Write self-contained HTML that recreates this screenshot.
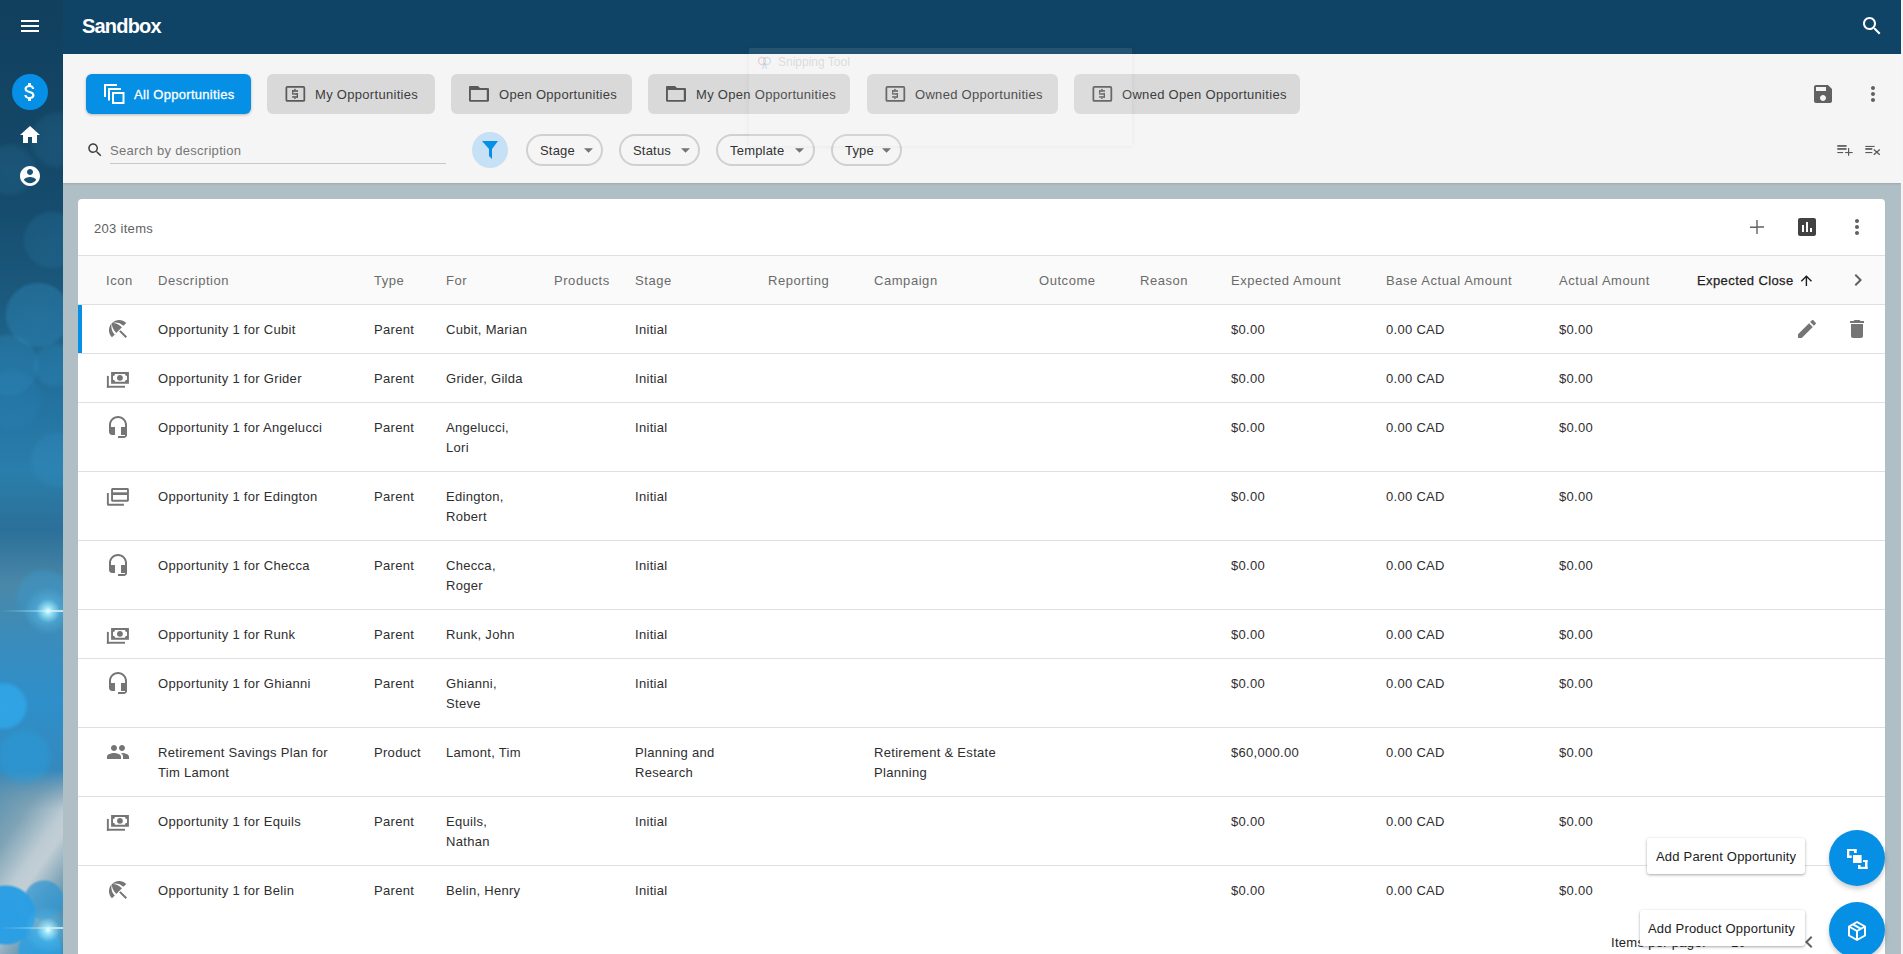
<!DOCTYPE html>
<html><head><meta charset="utf-8">
<style>
*{box-sizing:border-box;margin:0;padding:0}
html,body{width:1903px;height:954px;overflow:hidden}
body{position:relative;background:#b0bec5;font-family:"Liberation Sans",sans-serif;font-size:13px;color:#212121}
.a{position:absolute}
svg{display:block}
#side{left:0;top:0;width:63px;height:954px;overflow:hidden;
background:
radial-gradient(circle at 48px 611px,rgba(240,255,255,1) 0,rgba(170,240,255,.85) 4px,rgba(100,200,240,.35) 12px,rgba(80,180,230,0) 24px),
radial-gradient(circle at 4px 706px,rgba(48,165,230,.95) 0,rgba(48,165,230,.9) 20px,rgba(48,165,230,0) 25px),
radial-gradient(circle at 24px 757px,rgba(44,150,210,.85) 0,rgba(44,150,210,.75) 22px,rgba(44,150,210,0) 30px),
radial-gradient(circle at 44px 597px,rgba(60,150,200,.6) 0,rgba(60,150,200,.5) 24px,rgba(60,150,200,0) 30px),
radial-gradient(circle at 38px 315px,rgba(45,135,185,.45) 0,rgba(45,135,185,.4) 30px,rgba(45,135,185,0) 34px),radial-gradient(circle at 8px 365px,rgba(45,135,185,.4) 0,rgba(45,135,185,.35) 28px,rgba(45,135,185,0) 32px),radial-gradient(circle at 52px 240px,rgba(40,120,165,.3) 0,rgba(40,120,165,.25) 26px,rgba(40,120,165,0) 30px),radial-gradient(circle at 10px 170px,rgba(40,110,150,.3) 0,rgba(40,110,150,.25) 22px,rgba(40,110,150,0) 28px),radial-gradient(circle at 58px 140px,rgba(40,110,150,.3) 0,rgba(40,110,150,.25) 24px,rgba(40,110,150,0) 30px),radial-gradient(circle at 55px 365px,rgba(45,140,190,.35) 0,rgba(45,140,190,.3) 18px,rgba(45,140,190,0) 24px),
radial-gradient(circle at 12px 400px,rgba(40,130,180,.3) 0,rgba(40,130,180,.25) 26px,rgba(40,130,180,0) 32px),
radial-gradient(circle at 58px 460px,rgba(50,140,190,.35) 0,rgba(50,140,190,.3) 24px,rgba(50,140,190,0) 30px),
linear-gradient(180deg,#113f5e 0px,#134564 100px,#154b6c 200px,#1b5a7e 300px,#2372a0 400px,#2a7eab 470px,#2b7099 530px,#4a88a8 585px,#3a8cbc 640px,#2e8fca 700px,#3489bd 770px,#7097ab 805px,#b4c3cb 840px,#c5d0d6 868px,#5aa0c8 888px,#2b96d8 920px,#2a92d6 954px)}

#top{left:63px;top:0;width:1838px;height:54px;background:#104466}
#tb{left:63px;top:54px;width:1838px;height:129px;background:#f5f5f5;box-shadow:0 1px 2px rgba(0,0,0,.12)}
#card{left:78px;top:199px;width:1807px;height:760px;background:#fff;border-radius:4px 4px 0 0}
.t{position:absolute;white-space:nowrap;line-height:20px;letter-spacing:.3px;color:#2e2e2e}
.btn{position:absolute;top:74px;height:40px;border-radius:6px;background:#d9d9d9;color:#3d3d3d}
.btn .lbl{position:absolute;top:11px;line-height:20px;white-space:nowrap;letter-spacing:.3px}
.chip{position:absolute;top:134px;height:32px;border:2px solid #d0d0d0;border-radius:16px}
.chip .lbl{position:absolute;left:12px;top:5px;line-height:20px;letter-spacing:.2px;color:#333}
.hdr{position:absolute;top:271px;line-height:20px;white-space:nowrap;color:#6a6a6a;letter-spacing:.55px}
.line{position:absolute;left:78px;width:1807px;height:1px;background:#e0e0e0}
.ic{position:absolute;width:24px;height:24px}
</style></head><body>
<div id="side" class="a"></div>
<div id="top" class="a"></div>
<div class="a" style="left:0;top:610px;width:63px;height:2px;background:linear-gradient(90deg,rgba(200,245,255,0),rgba(200,245,255,.45) 70%,rgba(255,255,255,.7))"></div>
<div class="a" style="left:0;top:770px;width:63px;height:184px;-webkit-mask-image:linear-gradient(to bottom,transparent 0,#000 40px);background:
radial-gradient(circle at 48px 930px,rgba(240,255,255,1) 0,rgba(170,240,255,.85) 4px,rgba(100,200,240,.35) 12px,rgba(80,180,230,0) 24px),
radial-gradient(circle at 6px 915px,rgba(42,158,228,1) 0,rgba(42,158,228,.97) 28px,rgba(42,158,228,0) 31px),
radial-gradient(circle at 44px 900px,rgba(45,150,210,.75) 0,rgba(45,150,210,.7) 18px,rgba(45,150,210,0) 21px),
radial-gradient(circle at 40px 950px,rgba(45,160,225,.9) 0,rgba(45,160,225,.85) 20px,rgba(45,160,225,0) 23px),
linear-gradient(125deg,#4f8db0 0%,#7ea3b6 28%,#bccbd3 48%,#c2ced5 56%,#86a9bc 70%,#4a8db3 85%,#3d8ab8 100%);background-position:0 -770px,0 -770px,0 -770px,0 -770px,0 0;background-size:63px 954px,63px 954px,63px 954px,63px 954px,63px 184px;background-repeat:no-repeat"></div>
<div class="a" style="left:0;top:927px;width:63px;height:2px;background:linear-gradient(90deg,rgba(200,245,255,0),rgba(200,245,255,.45) 70%,rgba(255,255,255,.7))"></div>
<div id="tb" class="a"></div>
<div class="a" style="left:1901px;top:0;width:2px;height:954px;background:#f4f4f4"></div>

<!-- top bar -->
<svg class="a" style="left:18px;top:14px" width="24" height="24" viewBox="0 0 24 24"><path fill="#fff" d="M3 18h18v-2H3v2zm0-5h18v-2H3v2zm0-7v2h18V6H3z"/></svg>
<div class="a" style="left:82px;top:14px;line-height:24px;font-size:20px;font-weight:bold;color:#fff;letter-spacing:-0.8px">Sandbox</div>
<svg class="a" style="left:1860px;top:14px" width="24" height="24" viewBox="0 0 24 24"><path fill="#fff" d="M15.5 14h-.79l-.28-.27C15.41 12.59 16 11.11 16 9.5 16 5.91 13.09 3 9.5 3S3 5.91 3 9.5 5.91 16 9.5 16c1.61 0 3.09-.59 4.23-1.57l.27.28v.79l5 4.99L20.49 19l-4.99-5zm-6 0C7.01 14 5 11.99 5 9.5S7.01 5 9.5 5 14 7.01 14 9.5 11.99 14 9.5 14z"/></svg>
<!-- sidebar icons -->
<div class="a" style="left:12px;top:74px;width:36px;height:36px;border-radius:50%;background:#0590e6"></div>
<svg class="a" style="left:18px;top:80px" width="24" height="24" viewBox="0 0 24 24"><path fill="#fff" d="M11.8 10.9c-2.27-.59-3-1.2-3-2.15 0-1.09 1.01-1.85 2.7-1.85 1.78 0 2.440.85 2.5 2.1h2.21c-.07-1.72-1.12-3.3-3.21-3.81V3h-3v2.16c-1.94.42-3.5 1.68-3.5 3.610 0 2.31 1.91 3.46 4.7 4.13 2.5.6 3 1.48 3 2.41 0 .69-.49 1.79-2.7 1.79-2.06 0-2.87-.92-2.98-2.1h-2.2c.12 2.19 1.76 3.42 3.68 3.83V21h3v-2.15c1.95-.37 3.5-1.5 3.5-3.55 0-2.84-2.43-3.81-4.7-4.4z"/></svg>
<svg class="a" style="left:18px;top:123px" width="24" height="24" viewBox="0 0 24 24"><path fill="#fff" d="M10 20v-6h4v6h5v-8h3L12 3 2 12h3v8z"/></svg>
<svg class="a" style="left:18px;top:164px" width="24" height="24" viewBox="0 0 24 24"><path fill="#fff" d="M12 2C6.480 2 2 6.48 2 12s4.48 10 10 10 10-4.48 10-10S17.52 2 12 2zm0 3c1.66 0 3 1.34 3 3s-1.34 3-3 3-3-1.34-3-3 1.34-3 3-3zm0 14.2c-2.5 0-4.71-1.28-6-3.220.03-1.990 4-3.08 6-3.08 1.99 0 5.97 1.09 6 3.08-1.29 1.94-3.5 3.22-6 3.22z"/></svg>
<!-- toolbar buttons -->
<div class="a" style="left:86px;top:74px;width:165px;height:40px;border-radius:6px;background:#0590e6;box-shadow:0 1px 3px rgba(0,0,0,.25)"></div>
<svg class="a" style="left:102px;top:82px" width="24" height="24" viewBox="0 0 24 24"><g fill="none" stroke="#fff" stroke-width="2"><path d="M3 15V3h12"/><path d="M7 18.5V7h12"/><rect x="11" y="11" width="10.5" height="10"/></g></svg>
<div class="a" style="left:134px;top:85px;line-height:20px;color:#fff;letter-spacing:.3px;-webkit-text-stroke:.3px #fff;white-space:nowrap">All Opportunities</div>

<div class="btn" style="left:267px;width:168px"><svg class="a" style="left:16px;top:10px" width="24" height="22" viewBox="0 0 24 22"><rect x="3.375" y="2.875" width="17.95" height="14.05" rx="1" fill="none" stroke="#5a5a5a" stroke-width="1.75"/><g fill="#5a5a5a"><rect x="11.1" y="4.9" width="1.6" height="1.3"/><rect x="9.1" y="6.2" width="5.9" height="1.6"/><rect x="9.1" y="6.2" width="1.2" height="4.5"/><rect x="10.3" y="9.2" width="4.7" height="1.5"/><rect x="13.7" y="9.2" width="1.3" height="4.5"/><rect x="9.1" y="12.2" width="5.9" height="1.5"/><rect x="11.1" y="13.7" width="1.6" height="1.2"/></g></svg><div class="lbl" style="left:48px">My Opportunities</div></div>
<div class="btn" style="left:451px;width:181px"><svg class="a" style="left:16px;top:10px" width="24" height="22" viewBox="0 0 24 22"><path fill="#5a5a5a" fill-rule="evenodd" d="M2 3.2C2 2.5 2.5 2 3.2 2H11l2 2h7.8c.7 0 1.2.5 1.2 1.2v11.4c0 .7-.5 1.2-1.2 1.2H3.2c-.7 0-1.2-.5-1.2-1.2zM3.9 5.9v10h15.9v-10z"/></svg><div class="lbl" style="left:48px">Open Opportunities</div></div>
<div class="btn" style="left:648px;width:202px"><svg class="a" style="left:16px;top:10px" width="24" height="22" viewBox="0 0 24 22"><path fill="#5a5a5a" fill-rule="evenodd" d="M2 3.2C2 2.5 2.5 2 3.2 2H11l2 2h7.8c.7 0 1.2.5 1.2 1.2v11.4c0 .7-.5 1.2-1.2 1.2H3.2c-.7 0-1.2-.5-1.2-1.2zM3.9 5.9v10h15.9v-10z"/></svg><div class="lbl" style="left:48px">My Open Opportunities</div></div>
<div class="btn" style="left:867px;width:191px"><svg class="a" style="left:16px;top:10px" width="24" height="22" viewBox="0 0 24 22"><rect x="3.375" y="2.875" width="17.95" height="14.05" rx="1" fill="none" stroke="#5a5a5a" stroke-width="1.75"/><g fill="#5a5a5a"><rect x="11.1" y="4.9" width="1.6" height="1.3"/><rect x="9.1" y="6.2" width="5.9" height="1.6"/><rect x="9.1" y="6.2" width="1.2" height="4.5"/><rect x="10.3" y="9.2" width="4.7" height="1.5"/><rect x="13.7" y="9.2" width="1.3" height="4.5"/><rect x="9.1" y="12.2" width="5.9" height="1.5"/><rect x="11.1" y="13.7" width="1.6" height="1.2"/></g></svg><div class="lbl" style="left:48px">Owned Opportunities</div></div>
<div class="btn" style="left:1074px;width:226px"><svg class="a" style="left:16px;top:10px" width="24" height="22" viewBox="0 0 24 22"><rect x="3.375" y="2.875" width="17.95" height="14.05" rx="1" fill="none" stroke="#5a5a5a" stroke-width="1.75"/><g fill="#5a5a5a"><rect x="11.1" y="4.9" width="1.6" height="1.3"/><rect x="9.1" y="6.2" width="5.9" height="1.6"/><rect x="9.1" y="6.2" width="1.2" height="4.5"/><rect x="10.3" y="9.2" width="4.7" height="1.5"/><rect x="13.7" y="9.2" width="1.3" height="4.5"/><rect x="9.1" y="12.2" width="5.9" height="1.5"/><rect x="11.1" y="13.7" width="1.6" height="1.2"/></g></svg><div class="lbl" style="left:48px">Owned Open Opportunities</div></div>

<svg class="a" style="left:1811px;top:82px" width="24" height="24" viewBox="0 0 24 24"><path fill="#616161" d="M17 3H5c-1.11 0-2 .9-2 2v14c0 1.1.89 2 2 2h14c1.1 0 2-.9 2-2V7l-4-4zm-5 16c-1.66 0-3-1.34-3-3s1.34-3 3-3 3 1.34 3 3-1.34 3-3 3zm3-10H5V5h10v4z"/></svg>
<svg class="a" style="left:1861px;top:82px" width="24" height="24" viewBox="0 0 24 24"><path fill="#616161" d="M12 8c1.1 0 2-.9 2-2s-.9-2-2-2-2 .9-2 2 .9 2 2 2zm0 2c-1.1 0-2 .9-2 2s.9 2 2 2 2-.9 2-2-.9-2-2-2zm0 6c-1.1 0-2 .9-2 2s.9 2 2 2 2-.9 2-2-.9-2-2-2z"/></svg>

<!-- search row -->
<svg class="a" style="left:86px;top:141px" width="18" height="18" viewBox="0 0 24 24"><path fill="#424242" d="M15.5 14h-.79l-.28-.27C15.41 12.59 16 11.11 16 9.5 16 5.91 13.09 3 9.5 3S3 5.91 3 9.5 5.91 16 9.5 16c1.61 0 3.09-.59 4.23-1.57l.27.28v.79l5 4.99L20.49 19l-4.99-5zm-6 0C7.01 14 5 11.99 5 9.5S7.01 5 9.5 5 14 7.01 14 9.5 11.99 14 9.5 14z"/></svg>
<div class="t" style="left:110px;top:141px;color:#757575">Search by description</div>
<div class="a" style="left:110px;top:163px;width:336px;height:1px;background:#c8c8c8"></div>
<div class="a" style="left:472px;top:132px;width:36px;height:36px;border-radius:50%;background:#c6e1f5"></div>
<svg class="a" style="left:481px;top:140px" width="18" height="20" viewBox="0 0 18 20"><path fill="#0590e6" d="M1 1h16l-6 8v10l-3-3V9z"/></svg>
<div class="chip" style="left:526px;width:77px"><div class="lbl">Stage</div></div>
<div class="chip" style="left:619px;width:81px"><div class="lbl">Status</div></div>
<div class="chip" style="left:716px;width:99px"><div class="lbl">Template</div></div>
<div class="chip" style="left:831px;width:71px"><div class="lbl">Type</div></div>
<svg class="a" style="left:584px;top:148px" width="9" height="5" viewBox="0 0 10 5"><path fill="#757575" d="M0 0h10L5 5z"/></svg>
<svg class="a" style="left:681px;top:148px" width="9" height="5" viewBox="0 0 10 5"><path fill="#757575" d="M0 0h10L5 5z"/></svg>
<svg class="a" style="left:795px;top:148px" width="9" height="5" viewBox="0 0 10 5"><path fill="#757575" d="M0 0h10L5 5z"/></svg>
<svg class="a" style="left:882px;top:148px" width="9" height="5" viewBox="0 0 10 5"><path fill="#757575" d="M0 0h10L5 5z"/></svg>
<svg class="a" style="left:1836px;top:142px" width="18" height="16" viewBox="0 0 18 16"><g fill="#5a5a5a"><rect x="1.3" y="3.1" width="9.3" height="1.7"/><rect x="1.3" y="6.1" width="9.3" height="1.7"/><rect x="1.3" y="10" width="5.9" height="1.1"/><rect x="12" y="6.1" width="1.2" height="7.7"/><rect x="9.1" y="10" width="7.6" height="1.1"/></g></svg>
<svg class="a" style="left:1864px;top:142px" width="18" height="16" viewBox="0 0 18 16"><g fill="#5a5a5a"><rect x="1.3" y="3.9" width="9.3" height="1.1"/><rect x="1.3" y="6.1" width="7" height="1.7"/><rect x="1.3" y="10" width="7" height="1.1"/></g><path d="M9.8 7.5l6 5.2M15.8 7.5l-6 5.2" stroke="#5a5a5a" stroke-width="1.3"/></svg>

<div id="card" class="a"></div>
<div class="t" style="left:94px;top:219px;color:#616161">203 items</div>
<svg class="a" style="left:1745px;top:215px" width="24" height="24" viewBox="0 0 24 24"><path fill="#616161" d="M19 12.7h-6.3V19h-1.4v-6H5v-1.4h6.3V5h1.4v6.3H19z"/></svg>
<svg class="a" style="left:1795px;top:215px" width="24" height="24" viewBox="0 0 24 24"><path fill="#424242" d="M19 3H5c-1.1 0-2 .9-2 2v14c0 1.1.9 2 2 2h14c1.1 0 2-.9 2-2V5c0-1.1-.9-2-2-2zM9 17H7v-7h2v7zm4 0h-2V7h2v10zm4 0h-2v-4h2v4z"/></svg>
<svg class="a" style="left:1845px;top:215px" width="24" height="24" viewBox="0 0 24 24"><path fill="#616161" d="M12 8c1.1 0 2-.9 2-2s-.9-2-2-2-2 .9-2 2 .9 2 2 2zm0 2c-1.1 0-2 .9-2 2s.9 2 2 2 2-.9 2-2-.9-2-2-2zm0 6c-1.1 0-2 .9-2 2s.9 2 2 2 2-.9 2-2-.9-2-2-2z"/></svg>
<div class="line" style="top:255px"></div>
<div class="a" style="left:78px;top:256px;width:1807px;height:48px;background:#fafafa"></div>
<div class="hdr" style="left:106px">Icon</div>
<div class="hdr" style="left:158px">Description</div>
<div class="hdr" style="left:374px">Type</div>
<div class="hdr" style="left:446px">For</div>
<div class="hdr" style="left:554px">Products</div>
<div class="hdr" style="left:635px">Stage</div>
<div class="hdr" style="left:768px">Reporting</div>
<div class="hdr" style="left:874px">Campaign</div>
<div class="hdr" style="left:1039px">Outcome</div>
<div class="hdr" style="left:1140px">Reason</div>
<div class="hdr" style="left:1231px">Expected Amount</div>
<div class="hdr" style="left:1386px">Base Actual Amount</div>
<div class="hdr" style="left:1559px">Actual Amount</div>
<div class="hdr" style="left:1697px;color:#1e1e1e;letter-spacing:.4px;-webkit-text-stroke:.25px #1e1e1e">Expected Close</div>
<svg class="a" style="left:1798px;top:273px" width="16" height="16" viewBox="0 0 16 16"><g fill="none" stroke="#1e1e1e" stroke-width="1.4"><path d="M8.4 3.2V13"/><path d="M3.3 8.2L8.4 3.2l5.1 5"/></g></svg>
<svg class="a" style="left:1846px;top:268px" width="24" height="24" viewBox="0 0 24 24"><path fill="#616161" d="M10 6L8.59 7.41 13.17 12l-4.58 4.59L10 18l6-6z"/></svg>
<div class="line" style="top:304px"></div>
<svg class="a" style="left:106px;top:317px" width="24" height="24" viewBox="0 0 24 24"><path fill="#757575" d="M13.127 14.56l1.43-1.43 6.44 6.443L19.57 21zm4.293-5.73l2.86-2.86c-3.95-3.95-10.35-3.96-14.3-.02 3.930-1.3 8.310-.25 11.44 2.88zM5.95 5.98c-3.94 3.95-3.93 10.35.02 14.3l2.86-2.86C5.7 14.29 4.65 9.91 5.95 5.98zm.02-.02l-.01.01c-.38 3.01 1.17 6.88 4.3 10.02l5.73-5.73c-3.13-3.13-7.01-4.68-10.02-4.3z"/></svg>
<div class="t" style="left:158px;top:320px">Opportunity 1 for Cubit</div>
<div class="t" style="left:374px;top:320px">Parent</div>
<div class="t" style="left:446px;top:320px">Cubit, Marian</div>
<div class="t" style="left:635px;top:320px">Initial</div>
<div class="t" style="left:1231px;top:320px">$0.00</div>
<div class="t" style="left:1386px;top:320px">0.00 CAD</div>
<div class="t" style="left:1559px;top:320px">$0.00</div>
<div class="line" style="top:353px"></div>
<svg class="a" style="left:106px;top:366px" width="24" height="24" viewBox="0 0 24 24"><g fill="#757575"><path fill-rule="evenodd" d="M5.1 6h17.8v11.7H5.1zM9 7.9h10a2 2 0 0 0 2 2v3.9a2 2 0 0 0-2 2H9a2 2 0 0 0-2-2V9.9a2 2 0 0 0 2-2z"/><circle cx="13.95" cy="11.85" r="2.9"/><rect x=".9" y="9.9" width="1.9" height="11.8"/><rect x=".9" y="19.8" width="18.1" height="1.9"/></g></svg>
<div class="t" style="left:158px;top:369px">Opportunity 1 for Grider</div>
<div class="t" style="left:374px;top:369px">Parent</div>
<div class="t" style="left:446px;top:369px">Grider, Gilda</div>
<div class="t" style="left:635px;top:369px">Initial</div>
<div class="t" style="left:1231px;top:369px">$0.00</div>
<div class="t" style="left:1386px;top:369px">0.00 CAD</div>
<div class="t" style="left:1559px;top:369px">$0.00</div>
<div class="line" style="top:402px"></div>
<svg class="a" style="left:106px;top:415px" width="24" height="24" viewBox="0 0 24 24"><path fill="#757575" d="M12 1c-4.97 0-9 4.03-9 9v7c0 1.66 1.34 3 3 3h3v-8H5v-2c0-3.87 3.13-7 7-7s7 3.13 7 7v2h-4v8h4v1h-7v2h6c1.66 0 3-1.34 3-3V10c0-4.97-4.03-9-9-9z"/></svg>
<div class="t" style="left:158px;top:418px">Opportunity 1 for Angelucci</div>
<div class="t" style="left:374px;top:418px">Parent</div>
<div class="t" style="left:446px;top:418px">Angelucci,<br>Lori</div>
<div class="t" style="left:635px;top:418px">Initial</div>
<div class="t" style="left:1231px;top:418px">$0.00</div>
<div class="t" style="left:1386px;top:418px">0.00 CAD</div>
<div class="t" style="left:1559px;top:418px">$0.00</div>
<div class="line" style="top:471px"></div>
<svg class="a" style="left:106px;top:484px" width="24" height="24" viewBox="0 0 24 24"><g fill="#757575"><path fill-rule="evenodd" d="M6.6 4.1h14.8c.8 0 1.5.7 1.5 1.5v10.6c0 .8-.7 1.5-1.5 1.5H6.6c-.8 0-1.5-.7-1.5-1.5V5.6c0-.8.7-1.5 1.5-1.5zM7 6v9.8h14V6z"/><rect x="7" y="8.3" width="14" height="2.7"/><path d="M.9 8.9h1.9v10.9h15.1v1.9H2.4c-.8 0-1.5-.7-1.5-1.5z"/></g></svg>
<div class="t" style="left:158px;top:487px">Opportunity 1 for Edington</div>
<div class="t" style="left:374px;top:487px">Parent</div>
<div class="t" style="left:446px;top:487px">Edington,<br>Robert</div>
<div class="t" style="left:635px;top:487px">Initial</div>
<div class="t" style="left:1231px;top:487px">$0.00</div>
<div class="t" style="left:1386px;top:487px">0.00 CAD</div>
<div class="t" style="left:1559px;top:487px">$0.00</div>
<div class="line" style="top:540px"></div>
<svg class="a" style="left:106px;top:553px" width="24" height="24" viewBox="0 0 24 24"><path fill="#757575" d="M12 1c-4.97 0-9 4.03-9 9v7c0 1.66 1.34 3 3 3h3v-8H5v-2c0-3.87 3.13-7 7-7s7 3.13 7 7v2h-4v8h4v1h-7v2h6c1.66 0 3-1.34 3-3V10c0-4.97-4.03-9-9-9z"/></svg>
<div class="t" style="left:158px;top:556px">Opportunity 1 for Checca</div>
<div class="t" style="left:374px;top:556px">Parent</div>
<div class="t" style="left:446px;top:556px">Checca,<br>Roger</div>
<div class="t" style="left:635px;top:556px">Initial</div>
<div class="t" style="left:1231px;top:556px">$0.00</div>
<div class="t" style="left:1386px;top:556px">0.00 CAD</div>
<div class="t" style="left:1559px;top:556px">$0.00</div>
<div class="line" style="top:609px"></div>
<svg class="a" style="left:106px;top:622px" width="24" height="24" viewBox="0 0 24 24"><g fill="#757575"><path fill-rule="evenodd" d="M5.1 6h17.8v11.7H5.1zM9 7.9h10a2 2 0 0 0 2 2v3.9a2 2 0 0 0-2 2H9a2 2 0 0 0-2-2V9.9a2 2 0 0 0 2-2z"/><circle cx="13.95" cy="11.85" r="2.9"/><rect x=".9" y="9.9" width="1.9" height="11.8"/><rect x=".9" y="19.8" width="18.1" height="1.9"/></g></svg>
<div class="t" style="left:158px;top:625px">Opportunity 1 for Runk</div>
<div class="t" style="left:374px;top:625px">Parent</div>
<div class="t" style="left:446px;top:625px">Runk, John</div>
<div class="t" style="left:635px;top:625px">Initial</div>
<div class="t" style="left:1231px;top:625px">$0.00</div>
<div class="t" style="left:1386px;top:625px">0.00 CAD</div>
<div class="t" style="left:1559px;top:625px">$0.00</div>
<div class="line" style="top:658px"></div>
<svg class="a" style="left:106px;top:671px" width="24" height="24" viewBox="0 0 24 24"><path fill="#757575" d="M12 1c-4.97 0-9 4.03-9 9v7c0 1.66 1.34 3 3 3h3v-8H5v-2c0-3.87 3.13-7 7-7s7 3.13 7 7v2h-4v8h4v1h-7v2h6c1.66 0 3-1.34 3-3V10c0-4.97-4.03-9-9-9z"/></svg>
<div class="t" style="left:158px;top:674px">Opportunity 1 for Ghianni</div>
<div class="t" style="left:374px;top:674px">Parent</div>
<div class="t" style="left:446px;top:674px">Ghianni,<br>Steve</div>
<div class="t" style="left:635px;top:674px">Initial</div>
<div class="t" style="left:1231px;top:674px">$0.00</div>
<div class="t" style="left:1386px;top:674px">0.00 CAD</div>
<div class="t" style="left:1559px;top:674px">$0.00</div>
<div class="line" style="top:727px"></div>
<svg class="a" style="left:106px;top:740px" width="24" height="24" viewBox="0 0 24 24"><path fill="#757575" d="M16 11c1.66 0 2.99-1.34 2.99-3S17.66 5 16 5c-1.66 0-3 1.34-3 3s1.34 3 3 3zm-8 0c1.66 0 2.99-1.34 2.99-3S9.66 5 8 5C6.34 5 5 6.34 5 8s1.34 3 3 3zm0 2c-2.33 0-7 1.17-7 3.5V19h14v-2.5c0-2.33-4.67-3.5-7-3.5zm8 0c-.29 0-.62.02-.97.05 1.16.84 1.970 1.97 1.97 3.45V19h6v-2.5c0-2.33-4.67-3.5-7-3.5z"/></svg>
<div class="t" style="left:158px;top:743px">Retirement Savings Plan for<br>Tim Lamont</div>
<div class="t" style="left:374px;top:743px">Product</div>
<div class="t" style="left:446px;top:743px">Lamont, Tim</div>
<div class="t" style="left:635px;top:743px">Planning and<br>Research</div>
<div class="t" style="left:874px;top:743px">Retirement &amp; Estate<br>Planning</div>
<div class="t" style="left:1231px;top:743px">$60,000.00</div>
<div class="t" style="left:1386px;top:743px">0.00 CAD</div>
<div class="t" style="left:1559px;top:743px">$0.00</div>
<div class="line" style="top:796px"></div>
<svg class="a" style="left:106px;top:809px" width="24" height="24" viewBox="0 0 24 24"><g fill="#757575"><path fill-rule="evenodd" d="M5.1 6h17.8v11.7H5.1zM9 7.9h10a2 2 0 0 0 2 2v3.9a2 2 0 0 0-2 2H9a2 2 0 0 0-2-2V9.9a2 2 0 0 0 2-2z"/><circle cx="13.95" cy="11.85" r="2.9"/><rect x=".9" y="9.9" width="1.9" height="11.8"/><rect x=".9" y="19.8" width="18.1" height="1.9"/></g></svg>
<div class="t" style="left:158px;top:812px">Opportunity 1 for Equils</div>
<div class="t" style="left:374px;top:812px">Parent</div>
<div class="t" style="left:446px;top:812px">Equils,<br>Nathan</div>
<div class="t" style="left:635px;top:812px">Initial</div>
<div class="t" style="left:1231px;top:812px">$0.00</div>
<div class="t" style="left:1386px;top:812px">0.00 CAD</div>
<div class="t" style="left:1559px;top:812px">$0.00</div>
<div class="line" style="top:865px"></div>
<svg class="a" style="left:106px;top:878px" width="24" height="24" viewBox="0 0 24 24"><path fill="#757575" d="M13.127 14.56l1.43-1.43 6.44 6.443L19.57 21zm4.293-5.73l2.86-2.86c-3.95-3.95-10.35-3.96-14.3-.02 3.930-1.3 8.310-.25 11.44 2.88zM5.95 5.98c-3.94 3.95-3.93 10.35.02 14.3l2.86-2.86C5.7 14.29 4.65 9.91 5.95 5.98zm.02-.02l-.01.01c-.38 3.01 1.17 6.88 4.3 10.02l5.73-5.73c-3.13-3.13-7.01-4.68-10.02-4.3z"/></svg>
<div class="t" style="left:158px;top:881px">Opportunity 1 for Belin</div>
<div class="t" style="left:374px;top:881px">Parent</div>
<div class="t" style="left:446px;top:881px">Belin, Henry</div>
<div class="t" style="left:635px;top:881px">Initial</div>
<div class="t" style="left:1231px;top:881px">$0.00</div>
<div class="t" style="left:1386px;top:881px">0.00 CAD</div>
<div class="t" style="left:1559px;top:881px">$0.00</div>
<div class="a" style="left:78px;top:305px;width:4px;height:48px;background:#0590e6"></div>
<svg class="a" style="left:1795px;top:317px" width="24" height="24" viewBox="0 0 24 24"><path fill="#757575" d="M3 17.25V21h3.75L17.81 9.94l-3.75-3.75L3 17.25zM20.71 7.04c.39-.39.39-1.02 0-1.41l-2.34-2.34c-.39-.39-1.02-.39-1.41 0l-1.83 1.83 3.75 3.75 1.83-1.83z"/></svg>
<svg class="a" style="left:1845px;top:317px" width="24" height="24" viewBox="0 0 24 24"><path fill="#757575" d="M6 19c0 1.1.9 2 2 2h8c1.1 0 2-.9 2-2V7H6v12zM19 4h-3.5l-1-1h-5l-1 1H5v2h14V4z"/></svg>
<div class="t" style="left:1611px;top:933px;color:#212121">Items per page:</div>
<div class="t" style="left:1731px;top:933px;color:#212121">10</div>
<svg class="a" style="left:1797px;top:930px" width="24" height="24" viewBox="0 0 24 24"><path fill="#616161" d="M15.41 7.41L14 6l-6 6 6 6 1.41-1.41L10.83 12z"/></svg>
<div class="a" style="left:1647px;top:838px;width:158px;height:36px;background:#fff;border-radius:3px;box-shadow:0 1px 3px rgba(0,0,0,.35)"></div>
<div class="t" style="left:1656px;top:847px;color:#212121;letter-spacing:.2px">Add Parent Opportunity</div>
<div class="a" style="left:1640px;top:910px;width:165px;height:36px;background:#fff;border-radius:3px;box-shadow:0 1px 3px rgba(0,0,0,.35)"></div>
<div class="t" style="left:1648px;top:919px;color:#212121;letter-spacing:.2px">Add Product Opportunity</div>
<div class="a" style="left:1829px;top:830px;width:56px;height:56px;border-radius:50%;background:#0590e6;box-shadow:0 3px 5px rgba(0,0,0,.2)"></div>
<svg class="a" style="left:1845px;top:846px" width="24" height="24" viewBox="0 0 24 24"><g fill="#fff"><rect x="2" y="3" width="9.7" height="2"/><rect x="9" y="4.5" width="2.7" height="2.5"/><rect x="2" y="3" width="2.3" height="9"/><rect x="2" y="9.5" width="4.7" height="2.5"/><rect x="8" y="9" width="8.6" height="8"/><rect x="13" y="20.8" width="9.5" height="2.2"/><rect x="20" y="14" width="2.5" height="9"/><rect x="18" y="14" width="4.5" height="2"/><rect x="13" y="19" width="2.5" height="4"/></g></svg>
<div class="a" style="left:1829px;top:902px;width:56px;height:56px;border-radius:50%;background:#0590e6;box-shadow:0 3px 5px rgba(0,0,0,.2)"></div>
<svg class="a" style="left:1845px;top:919px" width="24" height="24" viewBox="0 0 24 24"><g fill="none" stroke="#fff" stroke-width="2" stroke-linejoin="round"><path d="M12 3l8 4.5v9L12 21l-8-4.5v-9z"/><path d="M4 7.5l8 4.5 8-4.5M12 12v9M8 5.3l8 4.5"/></g></svg>

<div class="a" style="left:749px;top:48px;width:383px;height:98px;background:rgba(255,255,255,.09);box-shadow:0 0 6px rgba(0,0,0,.06)"></div>
<svg class="a" style="left:757px;top:55px" width="15" height="15" viewBox="0 0 15 15"><g fill="none" stroke-width="1.3"><circle cx="5" cy="6" r="3.5" stroke="rgba(220,120,120,.3)"/><circle cx="10" cy="6" r="3.5" stroke="rgba(120,170,220,.3)"/><path d="M7.5 8l-2 6M7.5 8l2 6" stroke="rgba(120,170,220,.3)"/></g></svg>
<div class="a" style="left:778px;top:52px;line-height:20px;font-size:12px;color:rgba(170,170,170,.35);white-space:nowrap">Snipping Tool</div>
</body></html>
